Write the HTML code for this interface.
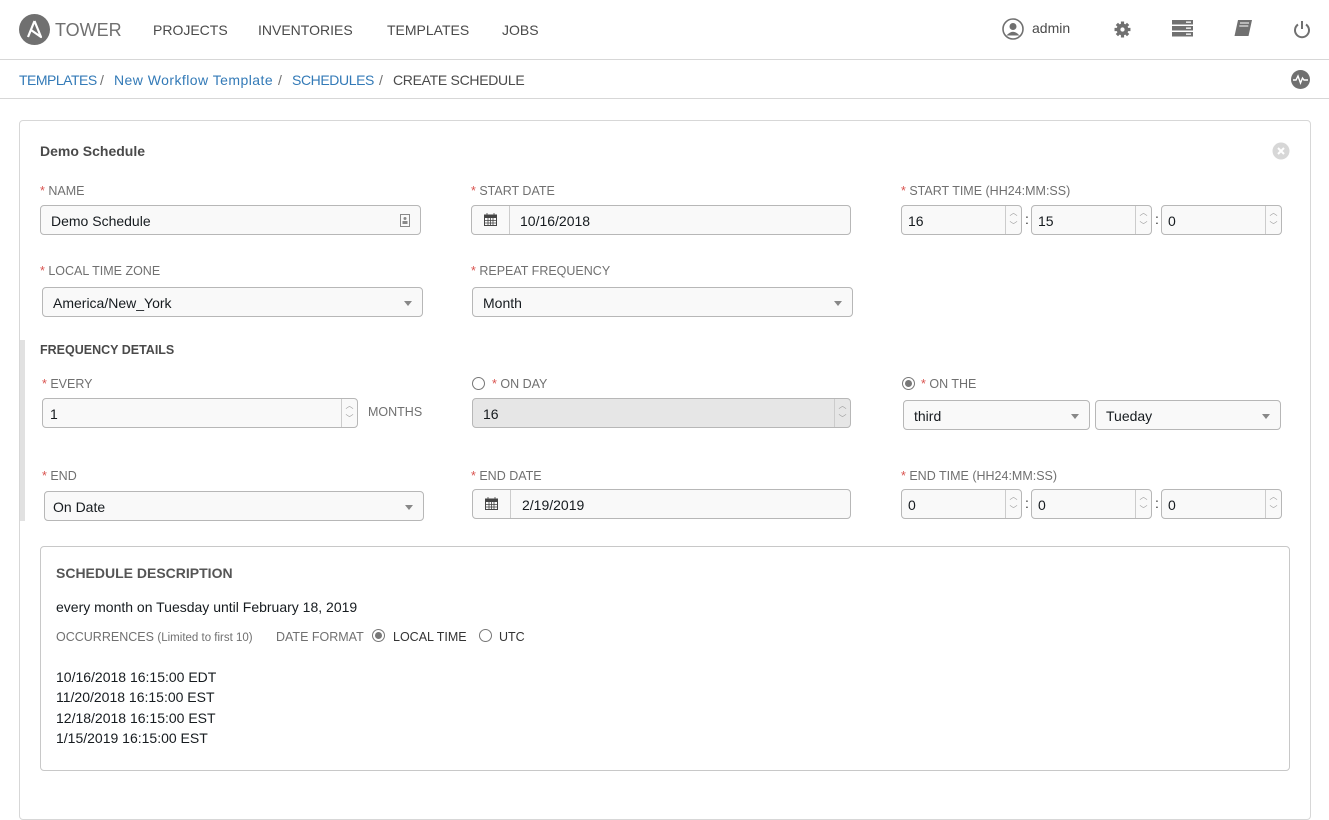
<!DOCTYPE html>
<html><head><meta charset="utf-8"><style>
*{box-sizing:border-box;margin:0;padding:0}
body{width:1329px;height:788px;background:#fff;font-family:"Liberation Sans",sans-serif;color:#161b1f;position:relative;overflow:hidden;font-size:14px}
.a{position:absolute;white-space:nowrap}
.nav{font-size:14px;color:#4a4a4a;top:22px}
.hl{position:absolute;left:0;width:1329px;height:1px;background:#d7d7d7}
.bc{top:72px;font-size:14px;color:#337ab7}
.bc i{font-style:normal;color:#707070}
.lbl{font-size:12.5px;color:#707070}
.lbl b{color:#d9534f;font-weight:normal}
.inp{position:absolute;border:1px solid #b7b7b7;border-radius:4px;background:#f9f9f9;height:30px;font-size:14px;padding:7px 10px 5px;color:#161b1f}
.sel::after{content:"";position:absolute;right:10px;top:13px;border-left:4px solid transparent;border-right:4px solid transparent;border-top:5px solid #888}
.spin{position:absolute;right:0;top:0;width:16px;height:28px;border-left:1px solid #ccc;font-size:8px;color:#999;text-align:center;line-height:13px}
.cal{position:absolute;left:0;top:0;width:38px;height:28px;border-right:1px solid #ccc}
.rad{position:absolute;width:13px;height:13px;border:1px solid #777;border-radius:50%;background:#fff}
.rad.on::after{content:"";position:absolute;left:2px;top:2px;width:7px;height:7px;border-radius:50%;background:#777}
.colon{font-size:14px;color:#333}
</style></head><body>
<svg class="a" style="left:19px;top:14px" width="31" height="31" viewBox="0 0 31 31"><circle cx="15.5" cy="15.5" r="15.5" fill="#707070"/><path d="M15.5 7 L9 23 M15.5 7 L22 23 L12 16" stroke="#fff" stroke-width="2.2" fill="none" stroke-linejoin="round"/></svg>
<div class="a" style="left:55px;top:20px;font-size:18px;color:#707070">TOWER</div>
<div class="a nav" style="left:153px">PROJECTS</div>
<div class="a nav" style="left:258px">INVENTORIES</div>
<div class="a nav" style="left:387px">TEMPLATES</div>
<div class="a nav" style="left:502px">JOBS</div>
<svg class="a" style="left:1002px;top:18px" width="22" height="22" viewBox="0 0 22 22"><circle cx="11" cy="11" r="10" fill="none" stroke="#707070" stroke-width="1.6"/><circle cx="11" cy="8.5" r="3.5" fill="#707070"/><path d="M4.5 17.5 Q11 10 17.5 17.5" fill="#707070"/></svg>
<div class="a" style="left:1032px;top:20px;font-size:14px;color:#4a4a4a">admin</div>
<svg class="a" style="left:1114px;top:21px" width="17" height="17" viewBox="0 0 16 16"><circle cx="8" cy="8" r="5.5" fill="#707070"/><g stroke="#707070" stroke-width="3"><path d="M8 0.5v15M0.5 8h15M2.7 2.7l10.6 10.6M13.3 2.7L2.7 13.3"/></g><circle cx="8" cy="8" r="2" fill="#fff"/></svg>
<svg class="a" style="left:1172px;top:20px" width="21" height="17"><rect y="0" width="21" height="4.5" fill="#707070"/><rect y="6" width="21" height="4.5" fill="#707070"/><rect y="12" width="21" height="4.5" fill="#707070"/><rect x="14" y="1.5" width="5" height="1.3" fill="#fff"/><rect x="14" y="7.5" width="5" height="1.3" fill="#fff"/><rect x="14" y="13.5" width="5" height="1.3" fill="#fff"/></svg>
<svg class="a" style="left:1233px;top:19px" width="20" height="19"><path d="M5 1h14l-3.5 16H1.5z" fill="#707070"/><path d="M7 4h9M6.3 7h9" stroke="#fff" stroke-width="1"/></svg>
<svg class="a" style="left:1293px;top:20px" width="18" height="19"><path d="M5 4.5A7 7 0 1 0 13 4.5" stroke="#707070" stroke-width="2" fill="none"/><path d="M9 1v8" stroke="#707070" stroke-width="2"/></svg>
<div class="hl" style="top:59px"></div>
<div class="a bc" style="left:19px;letter-spacing:-0.5px">TEMPLATES</div>
<div class="a bc" style="left:100px"><i>/</i></div>
<div class="a bc" style="left:114px;letter-spacing:0.45px">New Workflow Template</div>
<div class="a bc" style="left:278px"><i>/</i></div>
<div class="a bc" style="left:292px;letter-spacing:-0.4px">SCHEDULES</div>
<div class="a bc" style="left:379px"><i>/</i></div>
<div class="a bc" style="left:393px;color:#4a4a4a;letter-spacing:-0.3px">CREATE SCHEDULE</div>
<svg class="a" style="left:1291px;top:70px" width="19" height="19"><circle cx="9.5" cy="9.5" r="9.5" fill="#707070"/><path d="M2 10h3l2-4 2.5 7 2-5 1.5 2h4" stroke="#fff" stroke-width="1.4" fill="none"/></svg>
<div class="hl" style="top:98px"></div>

<div class="a" style="left:19px;top:120px;width:1292px;height:700px;border:1px solid #d7d7d7;border-radius:4px"></div>
<div class="a" style="left:20px;top:340px;width:5px;height:181px;background:#e1e1e1"></div>
<div class="a" style="left:40px;top:143px;font-size:14px;font-weight:bold;color:#4a4a4a">Demo Schedule</div>
<svg class="a" style="left:1272px;top:142px" width="18" height="18"><circle cx="9" cy="9" r="8.5" fill="#d7d7d7"/><path d="M6 6l6 6M12 6l-6 6" stroke="#fff" stroke-width="2"/></svg>

<div class="a lbl" style="left:40px;top:184px"><b>*</b> NAME</div>
<div class="a lbl" style="left:471px;top:184px"><b>*</b> START DATE</div>
<div class="a lbl" style="left:901px;top:184px"><b>*</b> START TIME (HH24:MM:SS)</div>
<div class="inp" style="left:40px;top:205px;width:381px">Demo Schedule<svg style="position:absolute;right:10px;top:8px" width="10" height="13"><rect x=".5" y=".5" width="9" height="12" fill="none" stroke="#888"/><circle cx="5" cy="4.5" r="1.5" fill="#888"/><rect x="2.5" y="7" width="5" height="3" fill="#888"/></svg></div>
<div class="inp" style="left:471px;top:205px;width:380px;padding-left:48px"><div class="cal"><svg style="position:absolute;left:12px;top:7px" width="13" height="13"><rect x=".5" y="2" width="12" height="10.5" fill="none" stroke="#444"/><rect x=".5" y="2" width="12" height="3" fill="#444"/><path d="M3 0v3M10 0v3M.5 7.5h12M.5 10h12M4 5v7M6.5 5v7M9 5v7" stroke="#444" stroke-width=".8"/></svg></div>10/16/2018</div>
<div class="inp" style="left:901px;top:205px;width:121px;padding-left:6px">16<div class="spin">︿<br>﹀</div></div>
<div class="a colon" style="left:1025px;top:211px">:</div>
<div class="inp" style="left:1031px;top:205px;width:121px;padding-left:6px">15<div class="spin">︿<br>﹀</div></div>
<div class="a colon" style="left:1155px;top:211px">:</div>
<div class="inp" style="left:1161px;top:205px;width:121px;padding-left:6px">0<div class="spin">︿<br>﹀</div></div>

<div class="a lbl" style="left:40px;top:264px"><b>*</b> LOCAL TIME ZONE</div>
<div class="a lbl" style="left:471px;top:264px"><b>*</b> REPEAT FREQUENCY</div>
<div class="inp sel" style="left:42px;top:287px;width:381px">America/New_York</div>
<div class="inp sel" style="left:472px;top:287px;width:381px">Month</div>

<div class="a" style="left:40px;top:343px;font-size:12.5px;font-weight:bold;color:#4a4a4a">FREQUENCY DETAILS</div>
<div class="a lbl" style="left:42px;top:377px"><b>*</b> EVERY</div>
<div class="inp" style="left:42px;top:398px;width:316px;padding-left:7px">1<div class="spin">︿<br>﹀</div></div>
<div class="a lbl" style="left:368px;top:405px">MONTHS</div>
<div class="rad" style="left:472px;top:377px"></div>
<div class="a lbl" style="left:492px;top:377px"><b>*</b> ON DAY</div>
<div class="inp" style="left:472px;top:398px;width:379px;background:#e6e6e6">16<div class="spin">︿<br>﹀</div></div>
<div class="rad on" style="left:902px;top:377px"></div>
<div class="a lbl" style="left:921px;top:377px"><b>*</b> ON THE</div>
<div class="inp sel" style="left:903px;top:400px;width:187px">third</div>
<div class="inp sel" style="left:1095px;top:400px;width:186px">Tueday</div>

<div class="a lbl" style="left:42px;top:469px"><b>*</b> END</div>
<div class="a lbl" style="left:471px;top:469px"><b>*</b> END DATE</div>
<div class="a lbl" style="left:901px;top:469px"><b>*</b> END TIME (HH24:MM:SS)</div>
<div class="inp sel" style="left:44px;top:491px;width:380px;padding-left:8px">On Date</div>
<div class="inp" style="left:472px;top:489px;width:379px;padding-left:49px"><div class="cal"><svg style="position:absolute;left:12px;top:7px" width="13" height="13"><rect x=".5" y="2" width="12" height="10.5" fill="none" stroke="#444"/><rect x=".5" y="2" width="12" height="3" fill="#444"/><path d="M3 0v3M10 0v3M.5 7.5h12M.5 10h12M4 5v7M6.5 5v7M9 5v7" stroke="#444" stroke-width=".8"/></svg></div>2/19/2019</div>
<div class="inp" style="left:901px;top:489px;width:121px;padding-left:6px">0<div class="spin">︿<br>﹀</div></div>
<div class="a colon" style="left:1025px;top:495px">:</div>
<div class="inp" style="left:1031px;top:489px;width:121px;padding-left:6px">0<div class="spin">︿<br>﹀</div></div>
<div class="a colon" style="left:1155px;top:495px">:</div>
<div class="inp" style="left:1161px;top:489px;width:121px;padding-left:6px">0<div class="spin">︿<br>﹀</div></div>

<div class="a" style="left:40px;top:546px;width:1250px;height:225px;border:1px solid #c8c8c8;border-radius:4px"></div>
<div class="a" style="left:56px;top:565px;font-size:14px;font-weight:bold;color:#555">SCHEDULE DESCRIPTION</div>
<div class="a" style="left:56px;top:599px;font-size:14px">every month on Tuesday until February 18, 2019</div>
<div class="a" style="left:56px;top:630px;font-size:12.5px;color:#707070">OCCURRENCES <span style="font-size:11.5px">(Limited to first 10)</span></div>
<div class="a" style="left:276px;top:630px;font-size:12.5px;color:#707070">DATE FORMAT</div>
<div class="rad on" style="left:372px;top:629px"></div>
<div class="a" style="left:393px;top:630px;font-size:12.5px;color:#333">LOCAL TIME</div>
<div class="rad" style="left:479px;top:629px"></div>
<div class="a" style="left:499px;top:630px;font-size:12.5px;color:#333">UTC</div>
<div class="a" style="left:56px;top:667px;font-size:14px;line-height:20.3px">10/16/2018 16:15:00 EDT<br>11/20/2018 16:15:00 EST<br>12/18/2018 16:15:00 EST<br>1/15/2019 16:15:00 EST</div>
</body></html>
